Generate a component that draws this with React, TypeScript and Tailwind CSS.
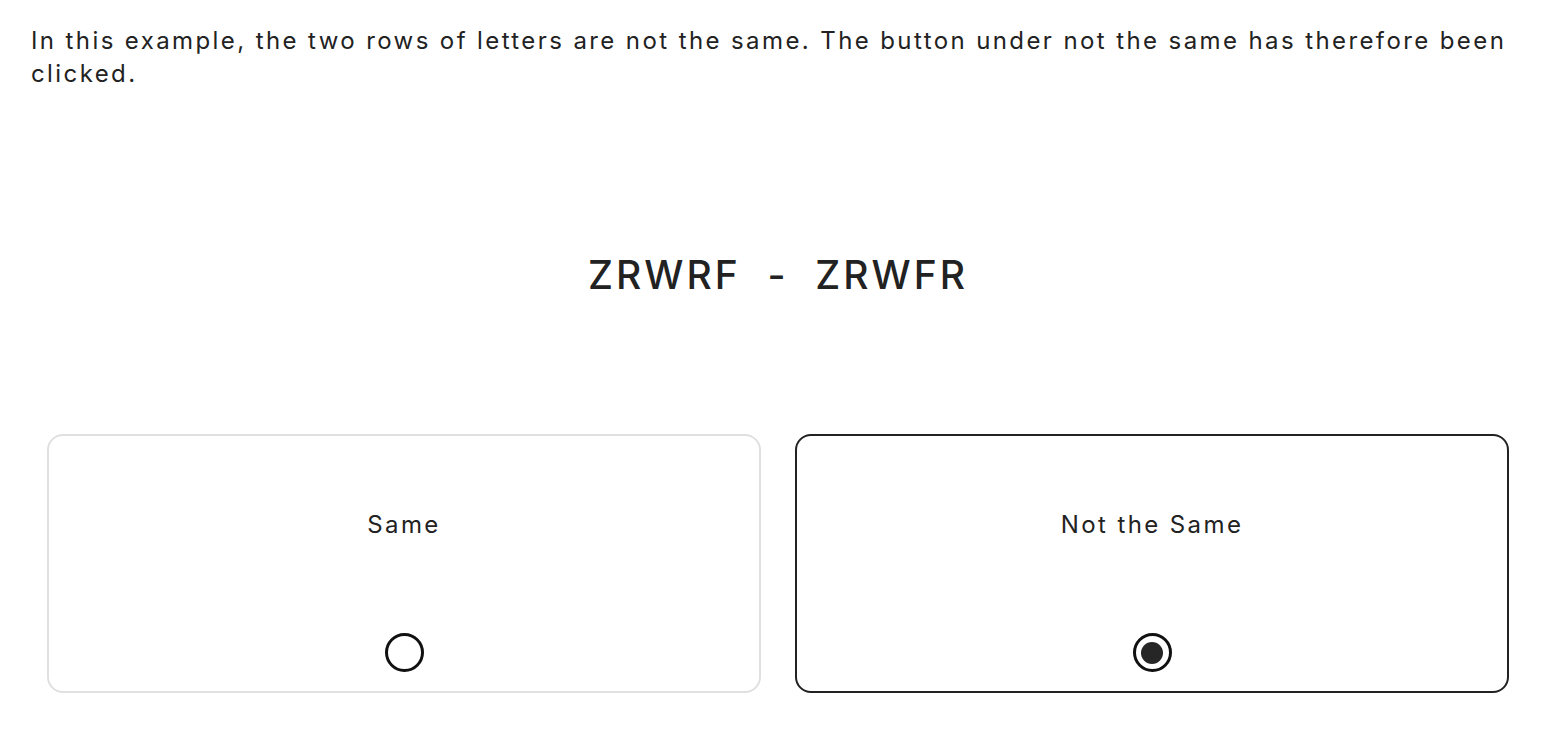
import { useState } from "react";

const options = ["Same", "Not the Same"];

const Radio = ({ checked }: { checked: boolean }) => (
  <span className="flex h-[39px] w-[39px] items-center justify-center rounded-full border-[3px] border-[#111]">
    {checked && <span className="h-[22px] w-[22px] rounded-full bg-[#262626]" />}
  </span>
);

export default function App() {
  const [selected, setSelected] = useState(1);

  return (
    <div className="min-h-screen bg-white px-[31px] pt-[24px] font-['Inter',sans-serif] text-[#222]">
      <p className="text-[24px] leading-[33px] tracking-[2.4px]">
        In this example, the two rows of letters are not the same. The button under not the same has therefore been
        clicked.
      </p>

      <h1 className="mt-[161px] text-center text-[39px] font-medium leading-[48px] tracking-[3px] whitespace-pre">
        ZRWRF  -  ZRWFR
      </h1>

      <div className="mt-[135px] grid grid-cols-2 gap-[34px] px-[16px]">
        {options.map((label, i) => (
          <button
            key={label}
            onClick={() => setSelected(i)}
            className={
              "flex h-[259px] flex-col items-center rounded-[16px] border-2 bg-white pt-[74px] pb-[19px] " +
              (selected === i ? "border-[#222]" : "border-[#e0e0e0]")
            }
          >
            <span className="text-[24px] leading-[30px] tracking-[2.4px]">{label}</span>
            <span className="mt-auto">
              <Radio checked={selected === i} />
            </span>
          </button>
        ))}
      </div>
    </div>
  );
}
